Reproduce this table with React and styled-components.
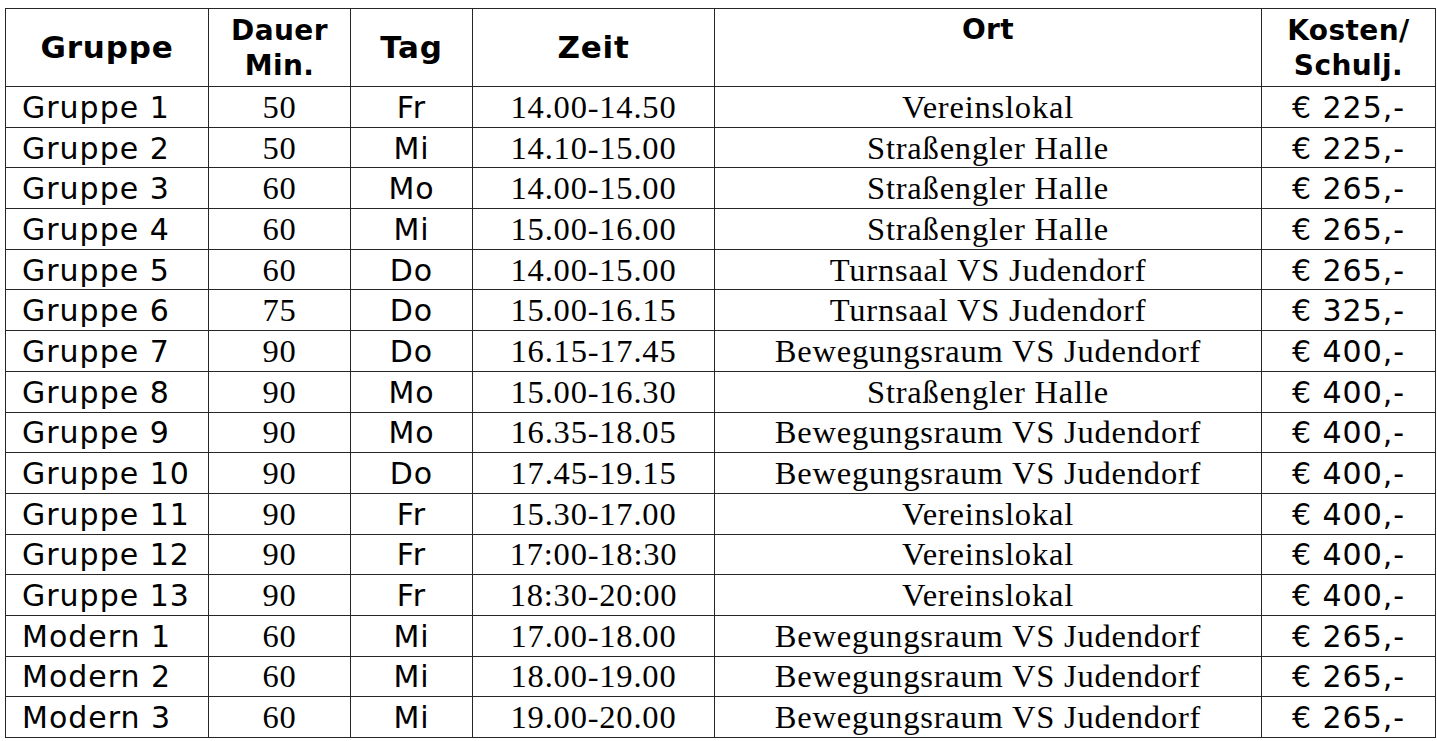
import React from "react";
import styled, { createGlobalStyle } from "styled-components";

const rows = [
  ["Gruppe 1", "50", "Fr", "14.00-14.50", "Vereinslokal", "€ 225,-"],
  ["Gruppe 2", "50", "Mi", "14.10-15.00", "Straßengler Halle", "€ 225,-"],
  ["Gruppe 3", "60", "Mo", "14.00-15.00", "Straßengler Halle", "€ 265,-"],
  ["Gruppe 4", "60", "Mi", "15.00-16.00", "Straßengler Halle", "€ 265,-"],
  ["Gruppe 5", "60", "Do", "14.00-15.00", "Turnsaal VS Judendorf", "€ 265,-"],
  ["Gruppe 6", "75", "Do", "15.00-16.15", "Turnsaal VS Judendorf", "€ 325,-"],
  ["Gruppe 7", "90", "Do", "16.15-17.45", "Bewegungsraum VS Judendorf", "€ 400,-"],
  ["Gruppe 8", "90", "Mo", "15.00-16.30", "Straßengler Halle", "€ 400,-"],
  ["Gruppe 9", "90", "Mo", "16.35-18.05", "Bewegungsraum VS Judendorf", "€ 400,-"],
  ["Gruppe 10", "90", "Do", "17.45-19.15", "Bewegungsraum VS Judendorf", "€ 400,-"],
  ["Gruppe 11", "90", "Fr", "15.30-17.00", "Vereinslokal", "€ 400,-"],
  ["Gruppe 12", "90", "Fr", "17:00-18:30", "Vereinslokal", "€ 400,-"],
  ["Gruppe 13", "90", "Fr", "18:30-20:00", "Vereinslokal", "€ 400,-"],
  ["Modern 1", "60", "Mi", "17.00-18.00", "Bewegungsraum VS Judendorf", "€ 265,-"],
  ["Modern 2", "60", "Mi", "18.00-19.00", "Bewegungsraum VS Judendorf", "€ 265,-"],
  ["Modern 3", "60", "Mi", "19.00-20.00", "Bewegungsraum VS Judendorf", "€ 265,-"],
];

const widths = [203, 142, 122, 242, 547, 174];

const GlobalStyle = createGlobalStyle`
  html, body {
    margin: 0;
    padding: 0;
    background: #fff;
  }
`;

const Page = styled.div`
  padding: 8px 0 0 5px;
`;

const Table = styled.table`
  border-collapse: collapse;
  table-layout: fixed;
  width: 1430px;
  color: #000;
`;

const HeadRow = styled.tr`
  height: 78px;
`;

const HeadCell = styled.th`
  padding: ${(p) => (p.top ? "3px 0 0" : "0")};
  border: 1.5px solid #262626;
  font-family: "DejaVu Sans", Verdana, sans-serif;
  font-weight: bold;
  font-size: ${(p) => (p.small ? "28px" : "31px")};
  letter-spacing: ${(p) => (p.small ? "0.4px" : "0.8px")};
  line-height: 35px;
  text-align: center;
  vertical-align: ${(p) => (p.top ? "top" : "middle")};
`;

const Row = styled.tr`
  height: 40.7px;
`;

const Cell = styled.td`
  padding: ${(p) => (p.serif ? "0" : "2px 0 0")};
  border: 1.5px solid #262626;
  font-family: ${(p) =>
    p.serif
      ? `"Liberation Serif", "Times New Roman", serif`
      : `"DejaVu Sans", Verdana, sans-serif`};
  font-size: ${(p) => (p.serif ? "32.5px" : "30px")};
  letter-spacing: ${(p) => (p.serif ? "0.8px" : "1px")};
  line-height: 36px;
  text-align: center;
  vertical-align: middle;
  white-space: nowrap;
`;

const NameCell = styled(Cell)`
  padding-left: 16px;
  text-align: left;
`;

export default function App() {
  return (
    <Page>
      <GlobalStyle />
      <Table>
        <colgroup>
          {widths.map((w, i) => (
            <col key={i} style={{ width: w }} />
          ))}
        </colgroup>
        <thead>
          <HeadRow>
            <HeadCell>Gruppe</HeadCell>
            <HeadCell small>
              Dauer
              <br />
              Min.
            </HeadCell>
            <HeadCell>Tag</HeadCell>
            <HeadCell>Zeit</HeadCell>
            <HeadCell small top>
              Ort
            </HeadCell>
            <HeadCell small>
              Kosten/
              <br />
              Schulj.
            </HeadCell>
          </HeadRow>
        </thead>
        <tbody>
          {rows.map((r) => (
            <Row key={r[0]}>
              <NameCell>{r[0]}</NameCell>
              <Cell serif>{r[1]}</Cell>
              <Cell>{r[2]}</Cell>
              <Cell serif>{r[3]}</Cell>
              <Cell serif>{r[4]}</Cell>
              <Cell>{r[5]}</Cell>
            </Row>
          ))}
        </tbody>
      </Table>
    </Page>
  );
}
